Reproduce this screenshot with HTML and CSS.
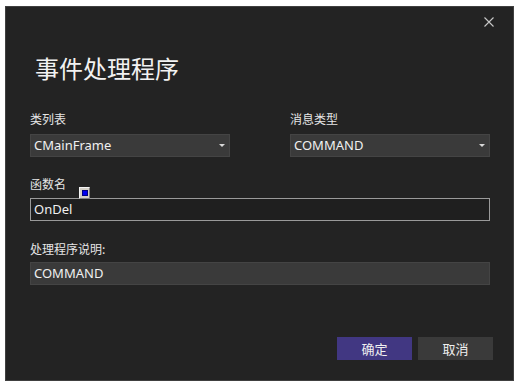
FILE: index.html
```html
<!DOCTYPE html>
<html lang="zh-CN">
<head>
    <meta charset="UTF-8">
    <title>事件处理程序</title>
    <link rel="stylesheet" href="styles.css">
</head>
<body>
    <div class="dialog">
        <div class="titlebar">
            <button class="close-btn" aria-label="关闭">
                <svg width="16" height="16" viewBox="0 0 16 16">
                    <path d="M3.5 3.5 L12.5 12.5 M12.5 3.5 L3.5 12.5" stroke="#c8c8c8" stroke-width="1.1" fill="none"/>
                </svg>
            </button>
        </div>

        <h1 class="title">事件处理程序</h1>

        <div class="row two-col">
            <div class="field">
                <label class="label">类列表</label>
                <div class="combo">
                    <span>CMainFrame</span>
                    <span class="arrow"></span>
                </div>
            </div>
            <div class="field">
                <label class="label">消息类型</label>
                <div class="combo">
                    <span>COMMAND</span>
                    <span class="arrow"></span>
                </div>
            </div>
        </div>

        <div class="field func-field">
            <label class="label">函数名</label>
            <span class="marker"><span class="marker-dot"></span></span>
            <div class="textbox focus">OnDel</div>
        </div>

        <div class="field desc-field">
            <label class="label">处理程序说明:</label>
            <div class="textbox filled">COMMAND</div>
        </div>

        <div class="buttons">
            <button class="btn primary">确定</button>
            <button class="btn">取消</button>
        </div>
    </div>
</body>
</html>
```

FILE: styles.css
```css
body {
    margin: 0;
    background: #ffffff;
    font-family: "Noto Sans", "Noto Sans CJK SC", sans-serif;
}

.dialog {
    box-sizing: border-box;
    width: 509px;
    height: 375px;
    margin: 6px 0 0 5px;
    padding: 0 23px 0 24px;
    background: #232323;
    border: 1px solid #404040;
    color: #e6e6e6;
    display: flex;
    flex-direction: column;
}

/* TITLE BAR */
.titlebar {
    display: flex;
    justify-content: flex-end;
    padding-top: 7px;
    margin-right: -7px;
}

.close-btn {
    width: 16px;
    height: 16px;
    padding: 0;
    border: none;
    background: none;
    display: flex;
}

.title {
    margin: 22px 0 0 0;
    padding-left: 5px;
    font-family: "Noto Sans CJK SC", sans-serif;
    font-size: 24px;
    font-weight: normal;
    line-height: 32px;
    color: #f2f2f2;
}

/* FIELDS */
.row.two-col {
    display: grid;
    grid-template-columns: 200px 200px;
    column-gap: 60px;
    margin-top: 27px;
}

.field {
    display: flex;
    flex-direction: column;
    position: relative;
}

.label {
    font-family: "Noto Sans CJK SC", sans-serif;
    font-size: 12px;
    line-height: 16px;
    color: #e6e6e6;
    margin-bottom: 7px;
}

.combo,
.textbox {
    box-sizing: border-box;
    height: 23px;
    padding: 0 3px;
    font-size: 13px;
    line-height: 21px;
    color: #f0f0f0;
    display: flex;
    align-items: center;
}

.combo {
    justify-content: space-between;
    background: #3a3a3a;
    border: 1px solid #444444;
}

.arrow {
    width: 0;
    height: 0;
    margin-right: 1px;
    border-left: 3px solid transparent;
    border-right: 3px solid transparent;
    border-top: 3px solid #d8d8d8;
}

.func-field {
    margin-top: 19px;
}

.func-field .label {
    margin-bottom: 6px;
}

.textbox.focus {
    background: #1f1f1f;
    border: 1px solid #9a9a9a;
}

/* small blue marker over the label */
.marker {
    position: absolute;
    left: 49px;
    top: 11px;
    box-sizing: border-box;
    width: 11px;
    height: 12px;
    background: #d4d0c8;
    border: 1px solid;
    border-color: #f4f4f4 #808080 #808080 #f4f4f4;
    display: flex;
    align-items: center;
    justify-content: center;
}

.marker-dot {
    width: 6px;
    height: 6px;
    background: #0000f0;
    border: 1px solid #000080;
    box-sizing: border-box;
}

.desc-field {
    margin-top: 20px;
}

.desc-field .label {
    margin-bottom: 5px;
}

.textbox.filled {
    background: #3a3a3a;
    border: 1px solid #444444;
}

/* BUTTONS */
.buttons {
    display: flex;
    justify-content: flex-end;
    gap: 6px;
    margin-top: 52px;
    margin-right: -3px;
}

.btn {
    width: 75px;
    height: 23px;
    padding: 0;
    border: none;
    background: #3a3a3a;
    color: #f0f0f0;
    font-family: "Noto Sans CJK SC", sans-serif;
    font-size: 13px;
}

.btn.primary {
    background: #413782;
}
```
